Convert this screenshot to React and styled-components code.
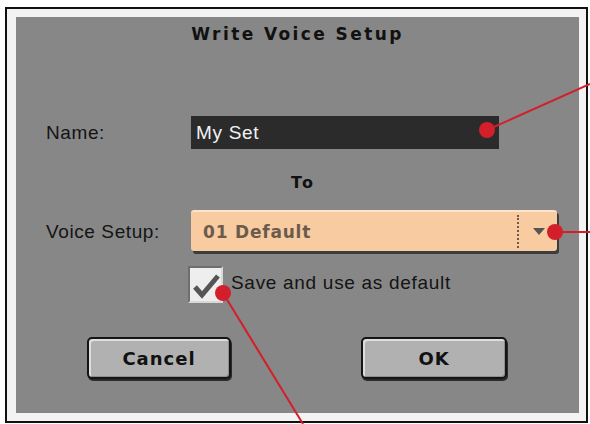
import React from "react";
import styled, { createGlobalStyle } from "styled-components";

const Global = createGlobalStyle`
  html, body { margin: 0; padding: 0; background: #ffffff; }
  body { width: 590px; height: 424px; overflow: hidden; }
`;

const Page = styled.div`
  position: relative;
  width: 590px;
  height: 424px;
  padding: 7px 2px 1px 5px;
  box-sizing: border-box;
`;

const Frame = styled.div`
  box-sizing: border-box;
  width: 583px;
  height: 416px;
  border: 2px solid #111;
  background: #f3f3f3;
  padding: 8px 7px 8px 9px;
  display: flex;
`;

const Panel = styled.div`
  flex: 1;
  background: #878787;
  display: flex;
  flex-direction: column;
  padding-left: 30px;
`;

const Title = styled.div`
  height: 35px;
  line-height: 35px;
  text-align: center;
  margin-left: -30px;
  font-family: "DejaVu Sans", sans-serif;
  font-weight: bold;
  font-size: 17px;
  letter-spacing: 2.4px;
  color: #111;
`;

const Row = styled.div`
  display: grid;
  grid-template-columns: 145px auto;
  align-items: center;
  height: ${(p) => p.$h}px;
  margin-top: ${(p) => p.$mt}px;
`;

const Label = styled.div`
  font-family: "Liberation Sans", Arial, sans-serif;
  font-size: 19px;
  letter-spacing: 0.6px;
  color: #141414;
`;

const NameField = styled.div`
  width: 308px;
  height: 33px;
  background: #2b2b2b;
  box-sizing: border-box;
  padding-left: 5px;
  display: flex;
  align-items: center;
  font-family: "Liberation Sans", Arial, sans-serif;
  font-size: 19px;
  letter-spacing: 0.7px;
  color: #f2f2f2;
`;

const ToRow = styled.div`
  margin-top: 24px;
  height: 19px;
  line-height: 19px;
  text-align: center;
  margin-left: -30px;
  padding-left: 11px;
  font-family: "DejaVu Sans", sans-serif;
  font-weight: bold;
  font-size: 16px;
  letter-spacing: 2px;
  color: #111;
`;

const Select = styled.div`
  position: relative;
  width: 366px;
  height: 41px;
  box-sizing: border-box;
  background: #f8cba1;
  border-radius: 3px;
  border-top: 2px solid #fde3c9;
  box-shadow: 2px 3px 0 #3c3c3c;
  display: flex;
  align-items: center;
  margin-top: -2px;
`;

const SelectText = styled.div`
  flex: 1;
  padding-left: 12px;
  font-family: "DejaVu Sans", sans-serif;
  font-weight: bold;
  font-size: 17px;
  letter-spacing: 0.8px;
  color: #6b5b4d;
`;

const SelectButton = styled.div`
  width: 38px;
  height: 33px;
  border-left: 2px dotted #6b5b4d;
  display: flex;
  align-items: center;
  justify-content: center;
`;

const Arrow = styled.div`
  width: 0;
  height: 0;
  border-left: 6px solid transparent;
  border-right: 6px solid transparent;
  border-top: 7px solid #555;
  margin-left: 2px;
`;

const CheckRow = styled.div`
  display: flex;
  align-items: center;
  margin-top: 14px;
  height: 37px;
  margin-left: 142px;
  gap: 8px;
`;

const Box = styled.div`
  width: 35px;
  height: 37px;
  box-sizing: border-box;
  background: #eeeeee;
  border: 2px solid;
  border-color: #6e6e6e #d8d8d8 #d8d8d8 #6e6e6e;
  display: flex;
  align-items: center;
  justify-content: center;
`;

const CheckLabel = styled.div`
  font-family: "Liberation Sans", Arial, sans-serif;
  font-size: 19px;
  letter-spacing: 0.7px;
  color: #141414;
  margin-top: -4px;
`;

const Buttons = styled.div`
  display: flex;
  margin-top: 34px;
  margin-left: 41px;
  gap: 130px;
`;

const Button = styled.div`
  width: ${(p) => p.$w}px;
  height: 42px;
  box-sizing: border-box;
  border: 2px solid #141414;
  border-radius: 5px;
  background: #b1b1b1;
  box-shadow: inset 2px 2px 0 #dedede, inset -1px -1px 0 #8e8e8e, 1px 2px 0 #2a2a2a;
  display: flex;
  align-items: center;
  justify-content: center;
  font-family: "DejaVu Sans", sans-serif;
  font-weight: bold;
  font-size: 18px;
  letter-spacing: 1px;
  color: #111;
`;

const Overlay = styled.svg`
  position: absolute;
  left: 0;
  top: 0;
  pointer-events: none;
`;

export default function App() {
  const red = "#d31f2b";
  return (
    <Page>
      <Global />
      <Frame>
        <Panel>
          <Title>Write Voice Setup</Title>
          <Row $h={33} $mt={64}>
            <Label>Name:</Label>
            <NameField>My Set</NameField>
          </Row>
          <ToRow>To</ToRow>
          <Row $h={41} $mt={19}>
            <Label>Voice Setup:</Label>
            <Select>
              <SelectText>01 Default</SelectText>
              <SelectButton>
                <Arrow />
              </SelectButton>
            </Select>
          </Row>
          <CheckRow>
            <Box>
              <svg width="30" height="30" viewBox="0 0 30 30">
                <path d="M4 17 L11 25 L27 6" fill="none" stroke="#555" strokeWidth="5" strokeLinejoin="miter" />
              </svg>
            </Box>
            <CheckLabel>Save and use as default</CheckLabel>
          </CheckRow>
          <Buttons>
            <Button $w={144}>Cancel</Button>
            <Button $w={146}>OK</Button>
          </Buttons>
        </Panel>
      </Frame>
      <Overlay width="590" height="424" viewBox="0 0 590 424">
        <line x1="487" y1="130" x2="590" y2="84" stroke={red} strokeWidth="2" />
        <circle cx="487" cy="130" r="8" fill={red} />
        <line x1="555" y1="232" x2="590" y2="232" stroke={red} strokeWidth="2" />
        <circle cx="555" cy="232" r="8" fill={red} />
        <line x1="223" y1="293" x2="303" y2="424" stroke={red} strokeWidth="2" />
        <circle cx="223" cy="293" r="8" fill={red} />
      </Overlay>
    </Page>
  );
}
